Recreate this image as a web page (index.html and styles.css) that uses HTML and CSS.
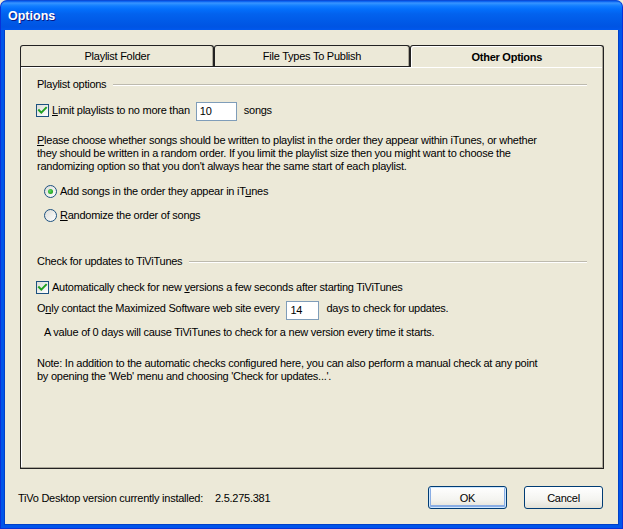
FILE: index.html
```html
<!DOCTYPE html>
<html>
<head>
<meta charset="utf-8">
<link rel="stylesheet" href="styles.css">
</head>
<body>
<div class="window">
  <div class="titlebar"><span class="title">Options</span></div>
  <div class="client">
    <div class="tabs">
      <div class="tab t1">Playlist Folder</div>
      <div class="tab t2">File Types To Publish</div>
      <div class="tab t3 active">Other Options</div>
    </div>
    <div class="panel">
      <div class="group g1"><span>Playlist options</span><div class="etch"></div></div>
      <div class="row limit">
        <span class="cb"><svg width="13" height="13" viewBox="0 0 13 13"><path d="M3 6.2 L5.3 8.6 L10 3.8" stroke="#21A121" stroke-width="2" fill="none" stroke-linecap="square"/></svg></span>
        <span class="lbl"><u>L</u>imit playlists to no more than</span>
        <span class="field f10">10</span>
        <span class="after">songs</span>
      </div>
      <p class="para"><u>P</u>lease choose whether songs should be written to playlist in the order they appear within iTunes, or whether<br>they should be written in a random order. If you limit the playlist size then you might want to choose the<br>randomizing option so that you don't always hear the same start of each playlist.</p>
      <div class="row radio r1"><span class="rb on"><span class="dot"></span></span><span class="lbl">Add songs in the order they appear in iT<u>u</u>nes</span></div>
      <div class="row radio r2"><span class="rb"></span><span class="lbl"><u>R</u>andomize the order of songs</span></div>
      <div class="group g2"><span>Check for updates to TiViTunes</span><div class="etch"></div></div>
      <div class="row auto">
        <span class="cb"><svg width="13" height="13" viewBox="0 0 13 13"><path d="M3 6.2 L5.3 8.6 L10 3.8" stroke="#21A121" stroke-width="2" fill="none" stroke-linecap="square"/></svg></span>
        <span class="lbl">Automatically check for new <u>v</u>ersions a few seconds after starting TiViTunes</span>
      </div>
      <div class="row only">
        <span class="txt">O<u>n</u>ly contact the Maximized Software web site every</span>
        <span class="field f14">14</span>
        <span class="after txt">days to check for updates.</span>
      </div>
      <p class="hint">A value of 0 days will cause TiViTunes to check for a new version every time it starts.</p>
      <p class="note">Note: In addition to the automatic checks configured here, you can also perform a manual check at any point<br>by opening the 'Web' menu and choosing 'Check for updates...'.</p>
    </div>
    <div class="footer">
      <span class="ver-label">TiVo Desktop version currently installed:</span>
      <span class="ver">2.5.275.381</span>
      <span class="spacer"></span>
      <button class="btn default">OK</button>
      <button class="btn">Cancel</button>
    </div>
  </div>
</div>
</body>
</html>
```

FILE: styles.css
```css
html, body {
  margin: 0;
  padding: 0;
  background: #ECE9D8;
}
.window {
  width: 623px;
  height: 529px;
  box-sizing: border-box;
  background: #0055EA;
  border-radius: 7px 7px 0 0;
  border: 1px solid #0831D9;
  border-top-color: #0A4BD8;
  font-family: "Liberation Sans", Arial, sans-serif;
  font-size: 11px;
  letter-spacing: -0.25px;
  color: #000;
  overflow: hidden;
}
.titlebar {
  height: 29px;
  margin: 0 -1px;
  background: linear-gradient(#0058EE 0px, #3A93FF 2px, #288EFF 3px, #127DFF 5px, #036FFC 8px, #0262EE 13px, #0057E5 23px, #0054E3 26px, #0058EE 29px);
  border-radius: 7px 7px 0 0;
  display: flex;
  align-items: center;
}
.title {
  margin-left: 8px;
  margin-top: 1px;
  color: #fff;
  font-weight: bold;
  font-size: 12.5px;
  letter-spacing: 0;
  text-shadow: 1px 1px #0A1883;
}
.client {
  margin: 0 3px;
  height: 495px;
  box-sizing: border-box;
  background: #ECE9D8;
  padding: 15px 14px 0 15px;
  border: 1px solid #0040C8;
  border-top: none;
}
.tabs {
  display: flex;
  height: 21px;
  align-items: flex-end;
}
.tab {
  box-sizing: border-box;
  height: 21px;
  border: 1px solid #222;
  border-bottom: none;
  border-radius: 3px 3px 0 0;
  text-align: center;
  line-height: 20px;
  box-shadow: inset -1px 0 #ACA899;
  background: #ECE9D8;
}
.t1 { width: 195px; }
.t2 { width: 196px; }
.t3 { width: 195px; }
.tab.active {
  height: 22px;
  margin-bottom: -1px;
  font-weight: bold;
  line-height: 22px;
  position: relative;
  z-index: 1;
  box-shadow: inset -1px 0 #ACA899, inset 1px 1px #fff;
}
.panel {
  box-sizing: border-box;
  height: 403px;
  border: 1px solid #222;
  box-shadow: inset -1px -1px #ACA899, inset 1px 1px #fff;
  padding: 11px 16px 0 16px;
}
.group {
  display: flex;
  align-items: center;
  height: 13px;
  line-height: 13px;
}
.etch {
  flex: 1;
  height: 0;
  border-top: 1px solid #BDBAAE;
  border-bottom: 1px solid #fff;
  margin-left: 7px;
  margin-top: 1px;
}
.g2 { margin-top: 33px; }
.row {
  display: flex;
  align-items: center;
  line-height: 13px;
  white-space: nowrap;
}
.cb {
  width: 13px;
  height: 13px;
  box-sizing: border-box;
  border: 1px solid #1C5180;
  background: linear-gradient(135deg, #DCDCD7, #fff);
  display: inline-flex;
  align-items: center;
  justify-content: center;
  margin-right: 3px;
  margin-left: -1px;
}
.cb svg { display: block; margin: -1px; }
.limit { height: 19px; margin-top: 10px; }
.field {
  box-sizing: border-box;
  height: 19px;
  border: 1px solid #7F9DB9;
  background: #fff;
  line-height: 17px;
  padding-left: 3px;
  margin-top: 1px;
}
.f10 { width: 41px; margin-left: 6px; }
.f14 { width: 33px; margin-left: 7px; }
.after { margin-left: 7px; }
.para {
  margin: 14px 0 0 0;
  line-height: 13px;
  white-space: nowrap;
}
.radio { height: 13px; }
.r1 { margin-top: 12px; margin-left: 7px; }
.r2 { margin-top: 11px; margin-left: 7px; }
.rb {
  width: 13px;
  height: 13px;
  box-sizing: border-box;
  border-radius: 50%;
  border: 1px solid #1C5180;
  background: linear-gradient(135deg, #DCDCD7, #fff);
  margin-right: 3px;
  display: inline-flex;
  align-items: center;
  justify-content: center;
}
.dot {
  width: 5px;
  height: 5px;
  border-radius: 50%;
  background: radial-gradient(circle at 40% 40%, #5FDB5F, #21A121 70%);
}
.auto { margin-top: 13px; height: 13px; }
.only { margin-top: 7px; height: 19px; align-items: flex-start; }
.only .field { margin-top: 0; }
.only .txt { margin-top: 1px; }
.hint {
  margin: 6px 0 0 7px;
  line-height: 13px;
  white-space: nowrap;
}
.note {
  margin: 18px 0 0 0;
  line-height: 13px;
  white-space: nowrap;
}
.footer {
  display: flex;
  align-items: center;
  margin: 17px 1px 0 -2px;
  height: 23px;
  white-space: nowrap;
}
.ver-label { flex-shrink: 0; }
.ver { flex-shrink: 0; margin-left: 12px; }
.spacer { flex: 1; }
.btn {
  width: 79px;
  height: 23px;
  flex-shrink: 0;
  box-sizing: border-box;
  border: 1px solid #003C74;
  border-radius: 3px;
  background: linear-gradient(#FFFFFF, #F4F4F0 60%, #E3E1D6);
  font-family: "Liberation Sans", Arial, sans-serif;
  font-size: 11px;
  letter-spacing: -0.25px;
  color: #000;
  padding: 0;
  margin-left: 17px;
}
.btn.default {
  box-shadow: inset 0 0 0 1px #CEE7FF, inset 0 -1px 0 2px #89ADE4;
}
u { text-decoration: underline; text-underline-offset: 1px; }
```
